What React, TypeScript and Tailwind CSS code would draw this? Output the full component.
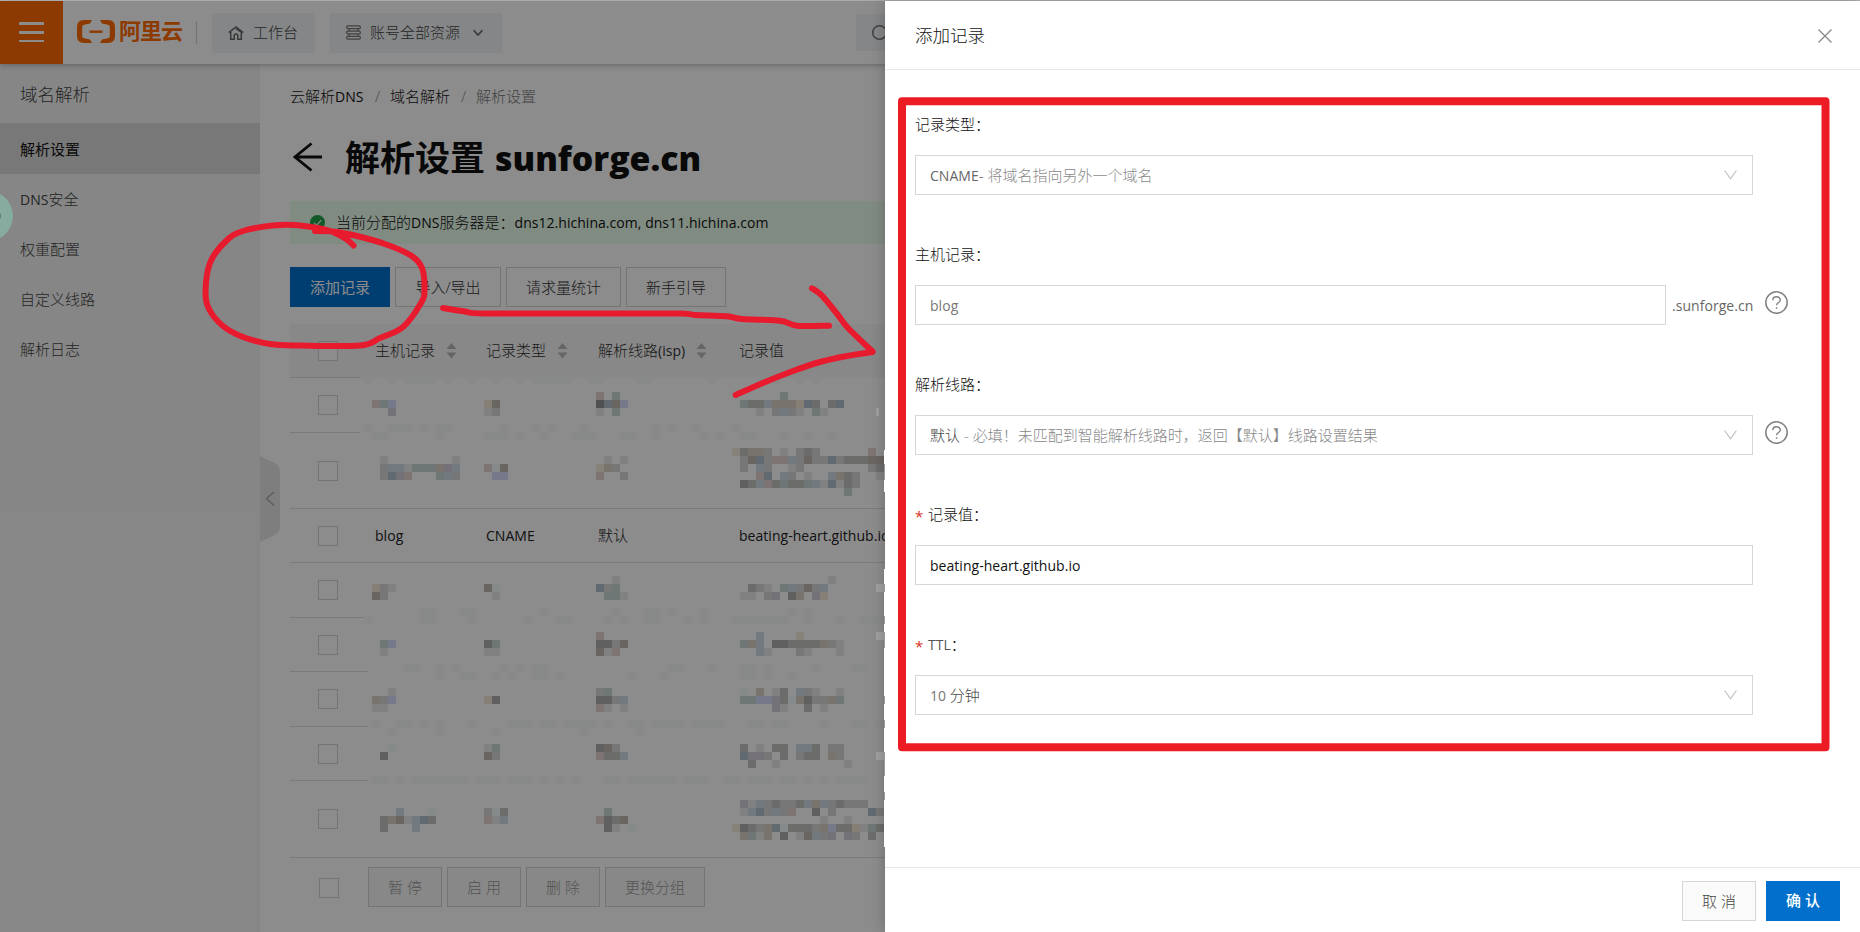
import React from "react";

const FONT = "font-['Open_Sans','Noto_Sans_CJK_SC',sans-serif] font-light";

function L({ children }: { children: React.ReactNode }) {
  return <span className="text-[14px] font-normal tracking-[0.04px]">{children}</span>;
}

/* ---------- icons ---------- */

function Logo() {
  return (
    <svg width="38" height="24" viewBox="0 0 38 24" fill="#ff6a00">
      <path d="M15 0H7Q0 0 0 7v9q0 7 7 7h8l-2-3.600-6-1.200Q5.200 17.800 5.200 16V7q0-1.800 1.800-2.200l6-1.200z" />
      <path d="M23 0h8q7 0 7 7v9q0 7-7 7h-8l2-3.600 6-1.200q1.800-.4 1.800-2.200V7q0-1.800-1.800-2.200l-6-1.200z" />
      <rect x="12.500" y="10.500" width="13" height="2.400" />
    </svg>
  );
}

function HomeIcon() {
  return (
    <svg width="16" height="14" viewBox="0 0 16 14" fill="none" stroke="#666" strokeWidth="1.500">
      <path d="M.8 6.600 8 1l7.200 5.600" />
      <path d="M2.700 6v7.200h3.500V9.800a1.800 1.800 0 0 1 3.600 0v3.400h3.500V6L8 2.600" />
    </svg>
  );
}

function StackIcon() {
  return (
    <svg width="15" height="15" viewBox="0 0 15 15" fill="none" stroke="#777" strokeWidth="1.200">
      <rect x=".7" y=".9" width="13.600" height="2.800" rx="1" />
      <rect x=".7" y="6.100" width="13.600" height="2.800" rx="1" />
      <rect x=".7" y="11.300" width="13.600" height="2.800" rx="1" />
      <path d="M3 3.700v2.400M12 3.700v2.400M3 8.900v2.400M12 8.900v2.400" />
    </svg>
  );
}

function SortIcon() {
  return (
    <svg width="11" height="16" viewBox="0 0 11 16" fill="#b8b8b8">
      <path d="M5.500 0 10.500 6H.5zM5.500 15.500 10.500 9.500H.5z" />
    </svg>
  );
}

function SelectArrow() {
  return (
    <svg width="13" height="10" viewBox="0 0 13 10" fill="none" stroke="#bfbfbf" strokeWidth="1.200">
      <path d="M.6.500 6.500 8.800 12.400.500" />
    </svg>
  );
}

function HelpIcon() {
  return (
    <svg width="23" height="23" viewBox="0 0 23 23" fill="none" stroke="#808080">
      <circle cx="11.500" cy="11.500" r="10.700" strokeWidth="1.500" />
      <path d="M7.800 9.300c0-4.600 7.500-4.600 7.500-.3 0 2.500-3.700 2.500-3.700 5.200" strokeWidth="1.400" />
      <rect x="10.900" y="16.200" width="1.400" height="1.600" fill="#808080" stroke="none" />
    </svg>
  );
}

/* ---------- page header and sidebar ---------- */

function TopBar() {
  return (
    <header className="relative z-10 flex h-[63px] shrink-0 items-center bg-white shadow-[0_1px_6px_rgba(0,0,0,0.3)]">
      <div className="flex h-full w-[63px] flex-col items-center justify-center gap-[6px] bg-[#ff6a00] pb-[2px]">
        <span className="h-[3px] w-[25px] bg-white" />
        <span className="h-[3px] w-[25px] bg-white" />
        <span className="h-[2px] w-[25px] bg-white" />
      </div>
      <div className="mb-[2px] ml-[14px] flex items-center">
        <Logo />
        <span className="mb-[3px] ml-[4px] w-[64px] text-[22px] leading-[24px] font-bold tracking-[-1px] text-[#ff6a00]">阿里云</span>
      </div>
      <div className="ml-[13px] h-[23px] w-px bg-[#d0d0d0]" />
      <div className="ml-[15px] flex h-10 w-[103px] items-center gap-[9px] rounded-[2px] bg-[#f2f4f7] pl-4 text-[15px] text-[#444]">
        <HomeIcon />
        <span>工作台</span>
      </div>
      <div className="ml-[15px] flex h-10 w-[172px] items-center gap-[9px] rounded-[2px] bg-[#f2f4f7] pl-4 text-[15px] text-[#444]">
        <StackIcon />
        <span>账号全部资源</span>
        <svg className="ml-[4px]" width="10" height="8" viewBox="0 0 10 8" fill="none" stroke="#666" strokeWidth="1.600">
          <path d="M.6 1.200 5 6 9.400 1.200" />
        </svg>
      </div>
      <div className="ml-[354px] flex h-[37px] w-[300px] items-center rounded-[2px] bg-[#f2f4f7] pl-4">
        <svg width="18" height="18" viewBox="0 0 18 18" fill="none" stroke="#777" strokeWidth="1.500">
          <circle cx="7.500" cy="8.500" r="6.800" />
          <path d="m12.500 13.500 4 4" />
        </svg>
      </div>
    </header>
  );
}

function Sidebar() {
  return (
    <aside className="w-[260px] shrink-0 bg-[#f5f5f5] text-[15px] text-[#444]">
      <div className="flex h-[59px] items-center pt-px pl-5 text-[17.500px]">域名解析</div>
      <div className="flex h-[51px] items-center bg-[#dadada] pt-px pl-5 font-normal text-[#111]">解析设置</div>
      <div className="flex h-[50px] items-center pl-5"><L>DNS</L>安全</div>
      <div className="flex h-[50px] items-center pl-5">权重配置</div>
      <div className="flex h-[50px] items-center pl-5">自定义线路</div>
      <div className="flex h-[50px] items-center pl-5">解析日志</div>
    </aside>
  );
}

/* ---------- record table ---------- */

function Box() {
  return <span className="block h-5 w-5 border border-[#d4d4d4] bg-white" />;
}

function Row({ height, line, cells }: { height: string; line: string; cells?: React.ReactNode[] }) {
  return (
    <div className={`flex flex-col ${height}`}>
      <div className="grid flex-1 grid-cols-[70px_111px_112px_141px_1fr] items-center text-[15px] whitespace-nowrap text-[#222]">
        <div className="pl-7"><Box /></div>
        {cells?.map((c, i) => (
          <div key={i} className="pl-[15px]">{c}</div>
        ))}
      </div>
      <div className={`h-px bg-[#e0e0e0] ${line}`} />
    </div>
  );
}

function Head({ children, sort = true }: { children: React.ReactNode; sort?: boolean }) {
  return (
    <div className="flex items-center gap-[11px] pl-[15px]">
      <span>{children}</span>
      {sort && <SortIcon />}
    </div>
  );
}

function Btn({ children, width, disabled }: { children: React.ReactNode; width: string; disabled?: boolean }) {
  return (
    <button className={`h-10 border border-[#d4d4d4] text-[15px] ${width} ${disabled ? "bg-[#f7f7f7] text-[#999]" : "bg-white text-[#333]"}`}>
      {children}
    </button>
  );
}

function Main() {
  return (
    <main className="flex flex-1 flex-col bg-white pl-[30px]">
      <div className="mt-[22px] flex h-5 items-center text-[15px] text-[#111]">
        <span className="w-[85px]">云解析<L>DNS</L></span>
        <span className="w-[15px] text-[#888]">/</span>
        <span className="w-[71px]">域名解析</span>
        <span className="w-[15px] text-[#888]">/</span>
        <span className="text-[#777]">解析设置</span>
      </div>
      <div className="mt-[29px] flex h-[44px] items-center">
        <svg className="ml-[3px]" width="30" height="30" viewBox="0 0 30 30" fill="none" stroke="#111" strokeWidth="2.800">
          <path d="M1.500 15H29M18.500 1.500 2 15l16.500 13.500" />
        </svg>
        <h1 className="mt-[2px] ml-[22px] flex gap-[10px] text-[35px] leading-[44px] font-bold text-[#111]">
          <span>解析设置</span>
          <span className="text-[33.800px] font-extrabold">sunforge.cn</span>
        </h1>
      </div>
      <div className="mt-[22px] flex h-[43px] items-center bg-[#e9fded] pl-5 text-[15px] text-[#111]">
        <svg width="15" height="15" viewBox="0 0 15 15">
          <circle cx="7.500" cy="7.500" r="7.500" fill="#24a04c" />
          <path d="m4 7.800 2.600 2.600 4.600-5.200" fill="none" stroke="#fff" strokeWidth="1.100" />
        </svg>
        <span className="ml-[11px]">当前分配的<L>DNS</L>服务器是：</span>
        <L>dns12.hichina.com, dns11.hichina.com</L>
      </div>
      <div className="mt-[23px] flex gap-[5px]">
        <button className="h-10 w-[100px] bg-[#0070cc] text-[15px] font-normal text-white">添加记录</button>
        <Btn width="w-[106px]">导入/导出</Btn>
        <Btn width="w-[115px]">请求量统计</Btn>
        <Btn width="w-[100px]">新手引导</Btn>
      </div>
      <div className="mt-[17px] flex h-[54px] flex-col bg-[#f8f8f8]">
        <div className="grid flex-1 grid-cols-[70px_111px_112px_141px_1fr] items-center text-[15px] whitespace-nowrap text-[#333]">
          <div className="pl-7"><Box /></div>
          <Head>主机记录</Head>
          <Head>记录类型</Head>
          <Head>解析线路<L>(isp)</L></Head>
          <Head sort={false}>记录值</Head>
        </div>
        <div className="h-px w-[70px] bg-[#dcdcdc]" />
      </div>
      <Row height="h-[55px]" line="w-[70px]" />
      <Row height="h-[76px]" line="w-full" />
      <Row
        height="h-[54px]"
        line="w-full"
        cells={[<L key="h">blog</L>, <L key="t">CNAME</L>, "默认", <L key="v">beating-heart.github.io</L>]}
      />
      <Row height="h-[55px]" line="w-[78px]" />
      <Row height="h-[54px]" line="w-[78px]" />
      <Row height="h-[55px]" line="w-[78px]" />
      <Row height="h-[54px]" line="w-[78px]" />
      <Row height="h-[77px]" line="w-full" />
      <div className="mt-[9px] flex items-center gap-[5px]">
        <div className="mt-px mr-[24px] ml-[29px]"><Box /></div>
        <Btn width="w-[74px]" disabled>暂 停</Btn>
        <Btn width="w-[74px]" disabled>启 用</Btn>
        <Btn width="w-[74px]" disabled>删 除</Btn>
        <Btn width="w-[100px]" disabled>更换分组</Btn>
      </div>
    </main>
  );
}

/* ---------- pixelated cells ---------- */

const TONES: Record<string, string> = {
  f: "#888989", L: "#868a8b", l: "#828181", m: "#787777", g: "#6c6c6b", d: "#616060", k: "#4f5051",
  w: "#867f76", b: "#78736d", n: "#696561", u: "#757989", s: "#727a7f", S: "#626a71", t: "#6f7776",
  p: "#757179", r: "#7d7473", e: "#858279",
};

const CELLS: [number, number, string][] = [
  [364, 376, "f..f.ffff.f..f..f..f.fffff..ff....ff.......f.....f.f..f.f"],
  [364, 424, "f..fff.f.ff......f...f.f...f........f.f..f....f"],
  [372, 432, "ff......f.....fff.f..f...fff...ff..f.....f.f..ff...f..f..f"],
  [420, 608, "ff...ff........f........f...ff.f...f..........f.f"],
  [364, 616, "f......ff....f......f...ff....f.f..ff...f.f...fffffff..f...f..fff"],
  [404, 664, "ff..f.f.....f.f.ff...............ff...f...ff.f.....f....ff"],
  [436, 672, "f..ff..f.f..ff.f........f...f.........ff.f..f"],
  [372, 720, "f..ff.f.f...f....fff.ff.ffff.f..ff.ffff.ffff...ff.ff....f...ff.f"],
  [388, 728, "f.....f......f..........f......f"],
  [372, 776, "ff.f.fffffff.fff.fff.f.f.f...ff.ffffff.fff..ff.fff.ff.f.f.ffff"],
  // host
  [372, 400, "rtu"], [388, 408, "p"],
  [380, 456, "l........l"], [380, 464, "mssltttbps"], [380, 472, "mSpr...tsm"],
  [372, 584, "wml"], [372, 592, "nm"],
  [380, 640, "tu"], [380, 648, "l"],
  [388, 688, "l"], [372, 696, "bmu"], [372, 704, "ll"],
  [388, 744, "L"], [380, 752, "d"],
  [396, 808, "s...L"], [380, 816, "gbnlsSg"], [380, 824, "g...s"],
  // type
  [484, 400, "wn"], [484, 408, "lm"],
  [484, 464, "rLn"], [492, 472, "uu"],
  [484, 584, "nL"], [492, 592, "l"],
  [484, 640, "dt"], [484, 648, "ll"],
  [484, 696, "wd"],
  [484, 744, "lt"], [484, 752, "nm"],
  [484, 808, "mLg"], [484, 816, "rls"],
  // line
  [596, 392, "r.t"], [596, 400, "kSnu"], [596, 408, "l.t"],
  [604, 456, "l.l"], [596, 464, "ebm"], [596, 472, "r..m"],
  [612, 576, "l"], [596, 584, "Smt"], [604, 592, "ttl"],
  [596, 632, "r"], [596, 640, "ddmn"], [596, 648, "nlr"],
  [596, 688, "mt"], [596, 696, "ddms"], [596, 704, "rl.l"],
  [596, 744, "dnm"], [596, 752, "rggs"],
  [604, 808, "t"], [596, 816, "rdgn"], [604, 824, "dl.L"],
  // value
  [780, 392, "t"], [740, 400, "tggsbbbwSg.gS"], [756, 408, "l.msml.tl"],
  [732, 448, "egbbm.l.mgm......r"], [740, 456, "mnSmrrsmnmmSmgggnn"], [740, 464, "m.sm..lm........mg"],
  [756, 472, "rS.sm.l..sbgm..l"], [740, 480, "dgsrgtggtslSlgm"], [844, 488, "t"],
  [828, 576, "l"], [748, 584, "gml.tsmnms"], [740, 592, "ll.mp.db.pw"],
  [756, 632, "s....e"], [740, 640, "tbs.ddggggbml"], [756, 648, "sl...ml...l"],
  [740, 688, "L.b.lg.sml..l"], [740, 696, "ttuupgLbdmmbt"], [772, 704, "pl..g.l"],
  [740, 744, "g.l.gg.ssg.mm"], [740, 752, "Sppm.g.mgg.bm"], [748, 760, "g..l........l"],
  [740, 800, "plsmgmmgsbsmgmmm"], [740, 808, "lsSmsmr..d.m....Sm"], [820, 816, "l..l"],
  [732, 824, "edgmbSLgggmbuggwltg"], [740, 832, "btlb.d.lnsmp.pm.g"],
];

function Mosaic() {
  return (
    <svg className="absolute top-0 left-0" width="885" height="932" shapeRendering="crispEdges">
      {CELLS.map(([x, y, row]) =>
        row.split("").map((c, i) =>
          c === "." ? null : <rect key={`${x}-${y}-${i}`} x={x + i * 8} y={y} width="8" height="8" fill={TONES[c]} />,
        ),
      )}
      <path d="M876 584h8v8h-8zM876 632h8v8h-8zM876 752h8v8h-8zM876 408h3v8h-3z" fill="#a0a0a0" />
    </svg>
  );
}

function DrawerEdge() {
  return (
    <svg className="absolute top-[450px] left-[884px]" width="1" height="397" viewBox="884 450 1 397" shapeRendering="crispEdges">
      <path d="M884.500 450v42M884.500 569v278" stroke="#fff" />
      <path d="M884.500 464v16M884.500 584v8M884.500 616v8M884.500 632v16M884.500 696v8M884.500 720v8M884.500 752v24M884.500 792v8" stroke="#999" />
    </svg>
  );
}

/* ---------- drawer ---------- */

function Field({ label, required, children }: { label: React.ReactNode; required?: boolean; children: React.ReactNode }) {
  return (
    <div className="h-[130px]">
      <div className="flex h-[41px] items-start text-[15px] leading-5 text-[#111]">
        {required && <span className="mt-[2px] w-[13px] text-[15px] font-normal text-[#d93026]">*</span>}
        <span>{label}</span>
      </div>
      <div className="flex h-10 items-center text-[15px] text-[#444]">{children}</div>
    </div>
  );
}

function Select({ children }: { children: React.ReactNode }) {
  return (
    <div className="flex h-10 w-[838px] items-center justify-between border border-[#d6d6d6] pr-[15px] pl-[14px]">
      <span>{children}</span>
      <SelectArrow />
    </div>
  );
}

function Drawer() {
  return (
    <section className="absolute top-px right-0 flex h-[931px] w-[975px] flex-col bg-white shadow-[-2px_0_12px_rgba(0,0,0,0.18)]">
      <div className="flex h-[69px] shrink-0 items-center justify-between border-b border-[#e8e8e8] pt-[2px] pr-[28px] pl-[30px] text-[17.500px] text-[#111]">
        <span className="mb-[2px]">添加记录</span>
        <svg width="14" height="14" viewBox="0 0 14 14" fill="none" stroke="#888" strokeWidth="1.300">
          <path d="M.5.500l13 13M13.500.500l-13 13" />
        </svg>
      </div>
      <div className="flex-1 pt-[44px] pl-[30px]">
        <Field label="记录类型：">
          <Select><span className="text-[#666]"><L>CNAME</L></span>- <span className="text-[#888]">将域名指向另外一个域名</span></Select>
        </Field>
        <Field label="主机记录：">
          <div className="flex h-10 w-[751px] items-center border border-[#d6d6d6] pl-[14px] text-[#777]"><L>blog</L></div>
          <span className="ml-[6px] w-[81px] text-[#666]"><L>.sunforge.cn</L></span>
          <span className="mb-[5px] ml-[12px]"><HelpIcon /></span>
        </Field>
        <Field label="解析线路：">
          <Select>默认 <span className="text-[#888]">- 必填！未匹配到智能解析线路时，返回【默认】线路设置结果</span></Select>
          <span className="mb-[5px] ml-[12px]"><HelpIcon /></span>
        </Field>
        <Field label="记录值：" required>
          <div className="flex h-10 w-[838px] items-center border border-[#d6d6d6] pl-[14px] text-[#111]">
            <span className="tracking-[0.1px]"><L>beating-heart.github.io</L></span>
          </div>
        </Field>
        <Field label={<><span className="text-[#555]"><L>TTL</L></span>：</>} required>
          <Select><span className="text-[#777]"><L>10 </L></span>分钟</Select>
        </Field>
      </div>
      <div className="flex h-[65px] shrink-0 items-start justify-end gap-[10px] border-t border-[#e8e8e8] pt-[13px] pr-5 text-[15px]">
        <button className="h-10 w-[74px] border border-[#d6d6d6] bg-[#fafafa] text-[#444]">取 消</button>
        <button className="h-10 w-[74px] bg-[#0070cc] pb-[2px] font-medium text-white">确 认</button>
      </div>
    </section>
  );
}

/* ---------- hand-drawn marks ---------- */

function smooth(pts: number[][]) {
  let d = `M${pts[0][0]} ${pts[0][1]}`;
  for (let i = 0; i < pts.length - 1; i++) {
    const a = pts[Math.max(i - 1, 0)];
    const b = pts[i];
    const c = pts[i + 1];
    const e = pts[Math.min(i + 2, pts.length - 1)];
    d += `C${b[0] + (c[0] - a[0]) / 6} ${b[1] + (c[1] - a[1]) / 6} ${c[0] - (e[0] - b[0]) / 6} ${c[1] - (e[1] - b[1]) / 6} ${c[0]} ${c[1]}`;
  }
  return d;
}

const STROKES = [
  [[353.5, 245.500], [346, 239], [330, 231], [308, 226.500], [280, 225], [243, 231], [225, 242], [210, 263], [205.500, 292], [209, 309], [223, 326], [243, 337], [270, 344], [300, 345.500], [360, 345.500], [380, 338], [403, 327], [421, 303], [424.500, 290], [422, 268], [411, 255.500], [385, 244], [353, 235], [333, 231.500], [315, 231]],
  [[443, 308], [465, 311.500], [485, 313.500], [600, 313.500], [680, 313.500], [695, 315], [727, 316.300], [742, 319], [780, 320.700], [797, 325.700], [829, 325.700]],
  [[812, 288.300], [822, 295.700], [838, 315], [848, 328], [872.500, 351.500]],
  [[872.500, 352], [847, 356], [820, 362], [793, 371], [764, 382.500], [735.700, 395]],
];

function Marks() {
  return (
    <svg className="absolute top-0 left-0" width="1860" height="932" fill="none" strokeLinecap="round" strokeLinejoin="round">
      {STROKES.map((s, i) => (
        <path key={i} d={smooth(s)} stroke="#e81a2e" strokeWidth="6" />
      ))}
      <rect x="902" y="101.300" width="923.500" height="646" stroke="#ed1c24" strokeWidth="8" />
    </svg>
  );
}

export default function App() {
  return (
    <div className={`relative h-[932px] w-[1860px] overflow-hidden bg-[#bbb] pt-px ${FONT}`}>
      <div className="isolate flex h-[931px] flex-col">
        <TopBar />
        <div className="flex flex-1">
          <Sidebar />
          <Main />
        </div>
      </div>
      <svg className="absolute top-[456px] left-[260px]" width="20" height="86" viewBox="0 0 20 86">
        <path d="M0 0 15 7q5 3 5 9v54q0 6-5 9L0 86z" fill="#e6e6e6" />
        <path d="M14 36 6.500 42.500l7.500 7" fill="none" stroke="#aaa" strokeWidth="1.500" />
      </svg>
      <div className="absolute inset-0 top-px bg-black/45" />
      <svg className="absolute top-[190px] left-0" width="14" height="52" viewBox="0 0 14 52">
        <circle cx="-12" cy="26" r="25" fill="#86ab9f" />
        <circle cx="-3" cy="26" r="4" fill="#5d7a70" />
      </svg>
      <Mosaic />
      <Drawer />
      <DrawerEdge />
      <Marks />
    </div>
  );
}
